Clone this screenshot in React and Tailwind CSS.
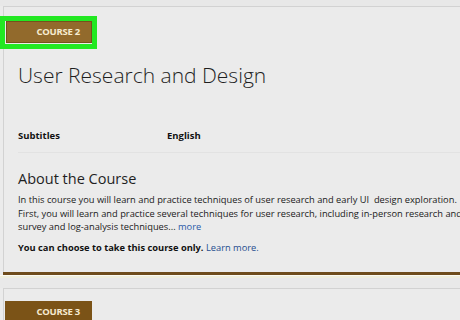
export default function App() {
  return (
    <div
      className="relative w-[460px] h-[320px] overflow-hidden bg-[#ebebeb] text-[#222]"
      style={{ fontFamily: '"Open Sans", "Liberation Sans", sans-serif' }}
    >
      <div className="h-[6px] bg-[#e8e8e8]" />

      {/* Course 2 card */}
      <div className="ml-[3px] border-t border-l border-[#d2d2d2] h-[266px]">
        <div className="pt-[14px] pl-[2px]">
          <div className="w-[86px] h-[22px] bg-[#926a2c] border border-[#74521d] flex items-center justify-end pr-[11px]">
            <span className="text-[9.5px] font-bold text-[#f7ecd0] tracking-tight">COURSE 2</span>
          </div>
        </div>

        <div className="pl-[14px]">
          <h1 className="mt-[18px] text-[21px] font-light leading-[28px] text-[#1f1f1f]">
            User Research and Design
          </h1>

          <div className="mt-[40px] flex text-[9.5px] font-bold leading-[14px] text-[#111] border-b border-[#e2e2e2] pb-[9px]">
            <span className="w-[149px]">Subtitles</span>
            <span>English</span>
          </div>

          <h2 className="mt-[15px] text-[14.5px] leading-[22px] text-[#1f1f1f]">About the Course</h2>
          <div className="mt-[3px] text-[9.3px] leading-[13.5px] text-[#1a1a1a] whitespace-nowrap">
            <div>In this course you will learn and practice techniques of user research and early UI &nbsp;design exploration.</div>
            <div>First, you will learn and practice several techniques for user research, including in-person research and</div>
            <div>
              survey and log-analysis techniques... <span className="text-[#2a5aa8]">more</span>
            </div>
          </div>
          <div className="mt-[7px] text-[9.3px] leading-[14px] whitespace-nowrap">
            <span className="font-bold text-[#111]">You can choose to take this course only.</span>{' '}
            <span className="text-[#1f4d8f]">Learn more.</span>
          </div>
        </div>
      </div>

      {/* divider */}
      <div className="ml-[3px] h-[3px] bg-[#6f4c1c]" />
      <div className="h-[1px] bg-[#fbfaf3]" />
      <div className="h-[2px] bg-[#efeedd]" />
      <div className="h-[10px] bg-[#e9e9e9]" />

      {/* Course 3 card */}
      <div className="ml-[3px] border-t border-l border-[#d2d2d2] h-[40px]">
        <div className="pt-[12px] pl-[1px]">
          <div className="w-[87px] h-[22px] bg-[#7b5317] flex items-center justify-end pr-[12px]">
            <span className="text-[9.5px] font-bold text-[#f6ead0] tracking-tight">COURSE 3</span>
          </div>
        </div>
      </div>

      {/* highlight annotation */}
      <div className="absolute left-0 top-[16px] w-[97px] h-[33px] border-[5px] border-[#22e822]" />
    </div>
  );
}
